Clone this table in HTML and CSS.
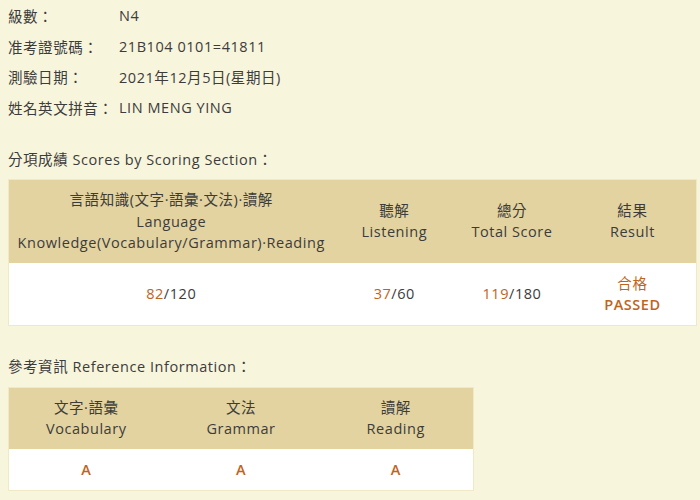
FILE: index.html
```html
<!DOCTYPE html>
<html>
<head>
<meta charset="utf-8">
<link rel="stylesheet" href="styles.css">
</head>
<body>
<div class="info">
  <div class="row"><span class="label">級數：</span><span class="value">N4</span></div>
  <div class="row"><span class="label">准考證號碼：</span><span class="value">21B104 0101=41811</span></div>
  <div class="row"><span class="label">測驗日期：</span><span class="value">2021年12月5日(星期日)</span></div>
  <div class="row"><span class="label">姓名英文拼音：</span><span class="value">LIN MENG YING</span></div>
</div>

<div class="section-title">分項成績 Scores by Scoring Section：</div>
<table class="scores">
  <colgroup><col class="c1"><col class="c2"><col class="c3"><col class="c4"></colgroup>
  <thead>
    <tr>
      <th>言語知識(文字·語彙·文法)·讀解<br>Language<br>Knowledge(Vocabulary/Grammar)·Reading</th>
      <th>聽解<br>Listening</th>
      <th>總分<br>Total Score</th>
      <th>結果<br>Result</th>
    </tr>
  </thead>
  <tbody>
    <tr>
      <td><span class="hl">82</span>/120</td>
      <td><span class="hl">37</span>/60</td>
      <td><span class="hl">119</span>/180</td>
      <td class="hl">合格<br><span class="strong">PASSED</span></td>
    </tr>
  </tbody>
</table>

<div class="section-title ref-title">參考資訊 Reference Information：</div>
<table class="ref">
  <thead>
    <tr>
      <th>文字·語彙<br>Vocabulary</th>
      <th>文法<br>Grammar</th>
      <th>讀解<br>Reading</th>
    </tr>
  </thead>
  <tbody>
    <tr>
      <td class="hl strong">A</td>
      <td class="hl strong">A</td>
      <td class="hl strong">A</td>
    </tr>
  </tbody>
</table>
</body>
</html>
```

FILE: styles.css
```css
html, body {
  margin: 0;
  padding: 0;
  background: #f8f5dd;
}
body {
  padding: 0 3px 0 8px;
  font-family: "Open Sans", "Noto Sans CJK TC", sans-serif;
  font-size: 14.5px;
  color: #3c3c3c;
  letter-spacing: 0.55px;
}
.info {
  padding-top: 0;
}
.row {
  display: flex;
  height: 30.7px;
  align-items: center;
}
.label {
  width: 111px;
  flex: none;
}
.section-title {
  margin-top: 22px;
  margin-bottom: 4px;
  height: 30px;
  line-height: 30px;
}
.ref-title {
  margin-top: 26px;
  margin-bottom: 5px;
}
table {
  border-collapse: collapse;
  text-align: center;
  border: 1px solid #f1e9c6;
}
.scores {
  width: 689px;
}
.scores col.c1 { width: 325px; }
.scores col.c2 { width: 122px; }
.scores col.c3 { width: 114px; }
.scores col.c4 { width: 128px; }
th {
  background: #e3d3a0;
  font-weight: normal;
  line-height: 21.5px;
}
td {
  background: #ffffff;
  line-height: 21px;
}
.scores th {
  height: 83px;
  padding: 0;
}
.scores td {
  height: 62px;
  padding: 0;
}
.ref {
  width: 466px;
  table-layout: fixed;
}
.ref th {
  height: 61px;
  padding: 0;
}
.ref td {
  height: 41px;
  padding: 0;
}
.hl {
  color: #c0641c;
}
.strong {
  font-weight: 600;
}
```
